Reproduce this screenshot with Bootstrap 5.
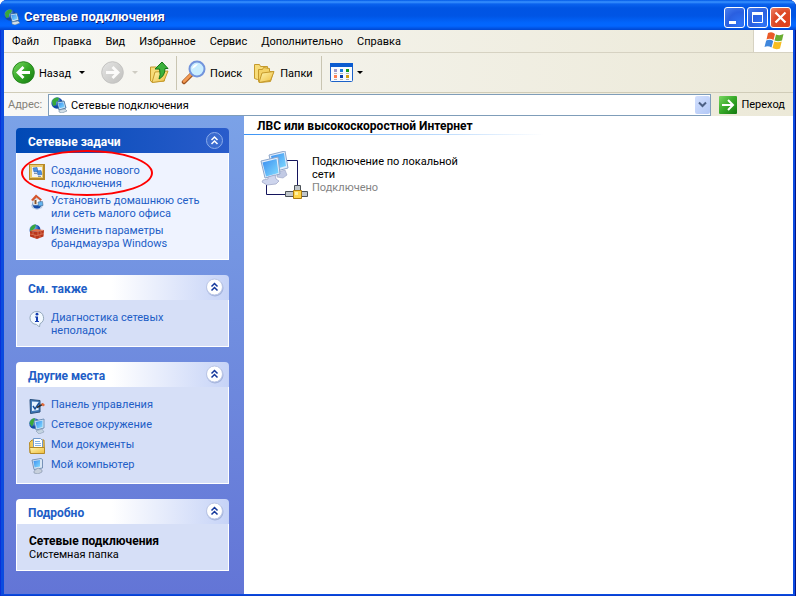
<!DOCTYPE html>
<html lang="ru">
<head>
<meta charset="utf-8">
<meta name="viewport" content="width=device-width, initial-scale=1">
<title>Сетевые подключения</title>
<link href="https://cdn.jsdelivr.net/npm/bootstrap@5.3.0/dist/css/bootstrap.min.css" rel="stylesheet">
<style>
body{font-family:Roboto,"Liberation Sans",sans-serif;font-size:11px;line-height:13px;color:#000;background:#fff}
button{font-size:11px;line-height:13px}
svg{display:block;flex:none}
.xp-window{background:#0a4be0;border-radius:7px 7px 0 0;padding:0 3px 2px 4px;box-shadow:inset 1px 0 #0831d9,inset -1px 0 #00138c,inset 0 -1px #0a3fd0}
.titlebar{height:30px;margin:0 -3px 0 -4px;padding:4px 5px 0 4px;border-radius:7px 7px 0 0;background:linear-gradient(#0058e6 0,#3a93ff 2px,#0a62ee 4px,#0054e3 8px,#0055e5 16px,#0266fd 23px,#0366ff 26px,#0046d0 30px)}
.titlebar h1{font-size:13px;line-height:16px;font-weight:700;color:#fff;text-shadow:1px 1px #0a1e80}
.win-buttons{gap:2px}
.win-btn{width:21px;height:21px;border:1px solid #fff;border-radius:3px;background:radial-gradient(circle at 80% 85%,#2f74f6,#2a5fe0 55%,#4a80ee);color:#fff}
.win-close{background:radial-gradient(circle at 75% 80%,#e0401c,#dc4a26 55%,#ee8468)}
.chrome{background:linear-gradient(90deg,#f8f8f5,#ece9d8)}
.menubar{height:23px;padding-left:1px;border-bottom:1px solid #d6d2c2}
.menubar .btn,.toolbar .btn,.go{border:0;border-radius:0;color:#000;line-height:13px;font-size:11px}
.menubar .btn{padding:4px 7px}
.flag{width:40px;background:#fff;border-left:1px solid #d6d2c2}
.toolbar{height:40px;border-bottom:1px solid #d0ccb8}
.toolbar .btn{padding:0}
.toolbar .btn span{padding-top:1px}
.toolbar .folders{margin-left:11px}
.divider{width:1px;height:34px;background:#c9c5b2}
.caret{width:0;height:0;border:3px solid transparent;border-top-color:#000;border-bottom:0}
.caret-off{border-top-color:#b8b6aa}
.address{height:23px}
.address label{color:#848278;width:40px}
.address-box{height:22px;padding-left:2px;background:#fff;border:1px solid #7f9db9}
.address-box input{border:0;outline:0;background:none;font-size:11px;line-height:13px;min-width:0;padding:1px 0 0}
.drop{width:15px;height:18px;border:0;border-radius:2px;background:linear-gradient(135deg,#d3e0fe,#b2c8f6);color:#4d6185}
.sidebar{width:240px;padding:12px 15px 12px 12px;background:linear-gradient(#7ba2e7,#6375d6);gap:15px}
.task-head{height:25px;padding:0 5px 0 12px;border-radius:4px 4px 0 0;background:linear-gradient(90deg,#fff 45%,#c6d3f7);color:#215dc6}
.task-head h2,.group-title{font-size:12px;line-height:15px;font-weight:700}
.task-head h2{padding-top:3px}
.task-head.primary-head{background:linear-gradient(90deg,#0049b5,#2a5ccb);color:#fff}
.task-body{padding:11px 12px 9px;border:1px solid #fff;border-top:0;background:#d6dff7}
.primary-body{background:#eff3ff}
.task-body a{color:#215dc6;gap:6px;min-height:16px}
.task-body strong{font-size:12px}
.fold{border:0;background:none}
.status{color:#848484}
.group-title{padding:3px 0 0 13px}
.group-line{height:1px;width:300px;max-width:100%;background:linear-gradient(90deg,#3a93f5,#fff)}
.connection{width:215px;gap:4px;padding-top:16px}
.highlight{position:absolute;left:5px;top:22px;width:132px;height:46px;border:2px solid #f00;border-radius:50%;pointer-events:none}
</style>
</head>
<body>
<svg width="0" height="0" class="position-absolute" aria-hidden="true">
<defs>
<linearGradient id="green" x2="1" y2="1"><stop stop-color="#7ad862"/><stop offset=".5" stop-color="#36a827"/><stop offset="1" stop-color="#137a10"/></linearGradient>
<linearGradient id="grey" x2="1" y2="1"><stop stop-color="#dedede"/><stop offset="1" stop-color="#a2a2a2"/></linearGradient>
<linearGradient id="screen" x2="1" y2="1"><stop stop-color="#3b8ef0"/><stop offset="1" stop-color="#82dcff"/></linearGradient>
<linearGradient id="yellow" x2="1" y2="1"><stop stop-color="#fff6b0"/><stop offset="1" stop-color="#eebc3c"/></linearGradient>
<radialGradient id="globe" cx=".35" cy=".3"><stop stop-color="#9cd4ff"/><stop offset="1" stop-color="#1248a8"/></radialGradient>
<symbol id="net" viewBox="0 0 16 16"><circle cx="6" cy="6" r="5.700" fill="url(#globe)"/><path d="M1 4C3 0 7 0 8 1L7 4 5 5 5 8 2 9Z" fill="#38a83a"/><path d="M6 5l7-1 2 7-7 2z" fill="#d4e6f6" stroke="#2d5f92" stroke-width=".8"/><path d="M7.200 6l5-.8 1.400 4.800-5 1.300z" fill="url(#screen)"/><path d="M8 13l6-1 2 2-5 2-3-1z" fill="#d2dfe8" stroke="#5d7c98" stroke-width=".5"/></symbol>
<symbol id="fold-light" viewBox="0 0 19 19"><circle cx="10" cy="10" r="8.500" fill="#8b9cca" opacity=".6"/><circle cx="9.500" cy="9" r="8" fill="#fff" stroke="#b9c5e6"/><path d="M6.500 8.500l3-3 3 3M6.500 12.500l3-3 3 3" fill="none" stroke="#14389c" stroke-width="1.500"/></symbol>
<symbol id="fold-dark" viewBox="0 0 19 19"><circle cx="9.500" cy="9.500" r="8" fill="#3a6bcf" stroke="#8cacea"/><path d="M6.500 9l3-3 3 3M6.500 13l3-3 3 3" fill="none" stroke="#fff" stroke-width="1.500"/></symbol>
</defs>
</svg>

<div class="xp-window min-vh-100 d-flex flex-column">
  <header class="titlebar d-flex align-items-center">
    <svg width="16" height="16"><use href="#net"/></svg>
    <h1 class="mb-0 ms-1 flex-grow-1">Сетевые подключения</h1>
    <div class="win-buttons d-flex">
      <button class="win-btn p-0" aria-label="Свернуть"><svg width="19" height="19"><path d="M4 13h7v3H4z" fill="#fff"/></svg></button>
      <button class="win-btn p-0" aria-label="Развернуть"><svg width="19" height="19"><path d="M4.500 4.500h10v10h-10z" fill="none" stroke="#fff"/><path d="M4 4h11v3H4z" fill="#fff"/></svg></button>
      <button class="win-btn win-close p-0" aria-label="Закрыть"><svg width="19" height="19"><path d="M4.500 4.500l10 10m0-10l-10 10" stroke="#fff" stroke-width="2.200"/></svg></button>
    </div>
  </header>

  <nav class="menubar chrome d-flex" aria-label="Меню">
    <div class="d-flex flex-grow-1">
      <button class="btn">Файл</button><button class="btn">Правка</button><button class="btn">Вид</button><button class="btn">Избранное</button><button class="btn">Сервис</button><button class="btn">Дополнительно</button><button class="btn">Справка</button>
    </div>
    <div class="flag d-flex align-items-center justify-content-center">
      <svg width="20" height="20"><path d="M4 2Q8 0 11 3L9.500 9Q6 7 2.500 8.500Z" fill="#ea5a28"/><path d="M12 3.500Q16 5 19.500 3L18 9.500Q14 11 10.500 9.500Z" fill="#6aad32"/><path d="M2.200 9.500Q6 8 9.200 10L7.500 16.500Q4 14.500.5 16Z" fill="#3e86dc"/><path d="M10.200 10.500Q14 12 17.700 10.500L16 17.500Q12 19 8.500 17Z" fill="#f8bd20"/></svg>
    </div>
  </nav>

  <div class="toolbar chrome d-flex align-items-center ps-2" role="toolbar" aria-label="Кнопки">
    <button class="btn d-flex align-items-center"><svg width="23" height="23"><circle cx="11.500" cy="11.500" r="10.800" fill="url(#green)" stroke="#27861f"/><path d="M18 11.500H7M11.500 6L6 11.500l5.500 5.500" fill="none" stroke="#fff" stroke-width="2.800"/></svg><span class="ms-1">Назад</span></button>
    <button class="btn px-2" aria-label="Журнал"><span class="caret d-block p-0"></span></button>
    <button class="btn ms-2" aria-label="Вперед" disabled><svg width="23" height="23"><circle cx="11.500" cy="11.500" r="10.800" fill="url(#grey)" stroke="#a9a9a9"/><path d="M5 11.500h11M11.500 6l5.500 5.500-5.500 5.500" fill="none" stroke="#fff" stroke-width="2.800"/></svg></button>
    <button class="btn px-2" aria-label="Журнал вперед" disabled><span class="caret caret-off d-block p-0"></span></button>
    <button class="btn ms-1" aria-label="Вверх"><svg width="22" height="23"><path d="M.5 6h6l1 2h7v12l-12 1-2-1z" fill="#f7dc78" stroke="#c59a2c"/><path d="M5 11l13-1-4 10-12 1.500z" fill="url(#yellow)" stroke="#c59a2c"/><path d="M5 8l7-7 6 6.500h-3Q15 15 9 18Q11 14 9.500 8z" fill="#3cb23c" stroke="#16781a"/></svg></button>
    <span class="divider mx-1"></span>
    <button class="btn d-flex align-items-center"><svg width="25" height="25"><path d="M3 22l8-8" stroke="#9e521e" stroke-width="4.500" stroke-linecap="round"/><path d="M3 21.500l7-7" stroke="#f39a52" stroke-width="2.500" stroke-linecap="round"/><circle cx="16" cy="9" r="7.500" fill="#c9edff" stroke="#7294dc" stroke-width="2"/><path d="M11 9q1-5 6-5-2 3-6 5" fill="#fff"/></svg><span class="ms-1">Поиск</span></button>
    <button class="btn folders d-flex align-items-center"><svg width="23" height="22"><path d="M1.500 2.500h5l1 2h7v12l-10 1-3-1z" fill="#f7dc78" stroke="#c59a2c"/><path d="M5.500 7.500h4l1-2 6 1v3h4l-3 10-11 1-1-1z" fill="#f4d266" stroke="#c59a2c"/><path d="M9 11l12-1.500-3.500 9-11.500 2z" fill="url(#yellow)" stroke="#c59a2c"/></svg><span class="ms-1">Папки</span></button>
    <span class="divider ms-2"></span>
    <button class="btn d-flex align-items-center ms-2" aria-label="Вид"><svg width="23" height="19"><rect x=".5" y=".5" width="22" height="18" rx="1" fill="#f8fbff" stroke="#1c62c8"/><path d="M0 0h23v4H0z" fill="#0a5bd0"/><path d="M4 6h3v3H4z" fill="#9e9ac8"/><path d="M10 6h3v3h-3z" fill="#1c7cdc"/><path d="M16 6h3v3h-3z" fill="#129a1c"/><path d="M4 12h3v3H4z" fill="#ff8050"/><path d="M10 12h3v3h-3z" fill="#083ca8"/><path d="M16 12h3v3h-3z" fill="#d8a010"/><path d="M4 10.500h3m3 0h3m3 0h3M4 16.500h3m3 0h3m3 0h3" stroke="#b4b4b4"/></svg><span class="caret p-0 ms-1"></span></button>
  </div>

  <form class="address chrome d-flex align-items-center ps-1">
    <label for="addr">Адрес:</label>
    <div class="address-box d-flex align-items-center flex-grow-1">
      <svg width="16" height="16"><use href="#net"/></svg>
      <input id="addr" class="flex-grow-1 ms-1" value="Сетевые подключения">
      <button type="button" class="drop p-0 d-flex align-items-center justify-content-center" aria-label="Список адресов"><svg width="9" height="7"><path d="M1 1.500l3.500 3.500L8 1.500" fill="none" stroke="currentColor" stroke-width="2"/></svg></button>
    </div>
    <button type="button" class="btn go d-flex align-items-center p-0 ms-2 me-2"><svg width="18" height="18"><rect width="18" height="18" rx="1" fill="url(#green)"/><path d="M3 9h11M9 4l5 5-5 5" fill="none" stroke="#fff" stroke-width="2"/></svg><span class="ms-1">Переход</span></button>
  </form>

  <div class="d-flex flex-grow-1 bg-white">
    <aside class="sidebar d-flex flex-column flex-shrink-0">
      <section class="position-relative">
        <div class="task-head primary-head d-flex align-items-center justify-content-between"><h2 class="mb-0">Сетевые задачи</h2><button class="fold p-0" aria-label="Свернуть раздел"><svg width="19" height="19"><use href="#fold-dark"/></svg></button></div>
        <div class="task-body primary-body d-flex flex-column gap-1">
          <a href="#" class="d-flex text-decoration-none"><svg width="16" height="16"><path d="M0 0h16v16H0z" fill="#b88a28"/><path d="M1 1h13v13H1z" fill="#e9c96c"/><path d="M3 3h10v10H3z" fill="#f2f4f8"/><path d="M4 4l4-.5 1 4-4 .5zM8 7l4-.5 1 4-4 .5z" fill="#4a90e2" stroke="#3468b4" stroke-width=".6"/><path d="M5 9h3v1H5zM9 12h3v1H9z" fill="#8796ac"/></svg><span>Создание нового<br>подключения</span></a>
          <a href="#" class="d-flex text-decoration-none"><svg width="16" height="16"><path d="M2 11l6-3 6 2-1 4-5 2-5-2z" fill="#b9cde6"/><circle cx="8" cy="10" r="4.500" fill="url(#globe)"/><path d="M4 5h7v6H4z" fill="#fff" stroke="#8898ac" stroke-width=".6"/><path d="M2 6L7 .5l6 5-1.500 1.200L7.500 3.500 4 7z" fill="#d4552c"/><path d="M5.500 6h2v4h-2z" fill="#86552c"/><path d="M9 8l4.500-.5.500 4-4.500.7z" fill="#63b4f2" stroke="#45698e" stroke-width=".6"/></svg><span>Установить домашнюю сеть<br>или сеть малого офиса</span></a>
          <a href="#" class="d-flex text-decoration-none"><svg width="16" height="16"><circle cx="6" cy="6" r="5.500" fill="url(#globe)"/><path d="M1 5q2-5 6-4.500L6 4 2 8z" fill="#3ba83c"/><path d="M1 7l8 1 6-2-.5 6.500L8 15l-7-2.500z" fill="#b9361c"/><path d="M1 7l6-2 8 1-6 2z" fill="#e57248"/><path d="M1 10l7 1.500 7-2M4 8v2.500M9 8v3.500M6 11v3M12 7.500V10m-1 1.500V14" fill="none" stroke="#eda07c" stroke-width=".5"/></svg><span>Изменить параметры<br>брандмауэра Windows</span></a>
        </div>
        <span class="highlight" aria-hidden="true"></span>
      </section>

      <section>
        <div class="task-head d-flex align-items-center justify-content-between"><h2 class="mb-0">См. также</h2><button class="fold p-0" aria-label="Свернуть раздел"><svg width="19" height="19"><use href="#fold-light"/></svg></button></div>
        <div class="task-body d-flex flex-column gap-1">
          <a href="#" class="d-flex text-decoration-none"><svg width="16" height="16"><path d="M8 .5a6.800 6.500 0 0 1 3 12.200L10.500 16 7.500 13.500A6.800 6.500 0 0 1 8 .5z" fill="#f2f9ff" stroke="#94a8bc"/><circle cx="8" cy="3.200" r="1.400" fill="#153db0"/><path d="M6 5.500h3V10h1v1H6v-1h1V6.500H6z" fill="#153db0"/></svg><span>Диагностика сетевых<br>неполадок</span></a>
        </div>
      </section>

      <section>
        <div class="task-head d-flex align-items-center justify-content-between"><h2 class="mb-0">Другие места</h2><button class="fold p-0" aria-label="Свернуть раздел"><svg width="19" height="19"><use href="#fold-light"/></svg></button></div>
        <div class="task-body d-flex flex-column gap-1">
          <a href="#" class="d-flex text-decoration-none"><svg width="16" height="16"><path d="M1 1.500l10 1V14L1.500 15.500z" fill="#3f79b8" stroke="#29507e"/><path d="M3 3.500l6.500.5v8L3 13z" fill="#e5f3ff"/><path d="M4 8l2 3 4-6" fill="none" stroke="#174e96" stroke-width="1.500"/><path d="M8 9.500L14 6" stroke="#2c2c2c" stroke-width="1.500"/><path d="M12 6l2-1 2 2-2 1.500z" fill="#e26937"/></svg><span>Панель управления</span></a>
          <a href="#" class="d-flex text-decoration-none"><svg width="16" height="16"><circle cx="5.500" cy="5.500" r="5.300" fill="url(#globe)"/><path d="M.5 5Q2 0 6 .2L5 4 3 9z" fill="#3aa83a"/><path d="M5 3l10-2v9L7 12z" fill="#d4e6f6" stroke="#5b7ea6" stroke-width=".8"/><path d="M6.500 4l7-1.500v6.500L8 10.500z" fill="url(#screen)"/><path d="M7 13l6-2 2 3-5 2z" fill="#c5d4e2" stroke="#7c90a8" stroke-width=".5"/></svg><span>Сетевое окружение</span></a>
          <a href="#" class="d-flex text-decoration-none"><svg width="16" height="16"><path d="M.5 4.500L3 2h12l.5 13H1z" fill="#f0c95a" stroke="#b58a28"/><path d="M4.500.5h7l2 2V11h-9z" fill="#fff" stroke="#7099cc"/><path d="M6 3.500h5M6 5.500h6M6 7.500h6" stroke="#84b4e4"/><path d="M.5 9.500h15v6h-14z" fill="url(#yellow)" stroke="#b58a28"/></svg><span>Мои документы</span></a>
          <a href="#" class="d-flex text-decoration-none"><svg width="16" height="16"><path d="M3 2l9-1.500 1.500 1V10L5 11.500z" fill="#d9e6f4" stroke="#5f7fa8" stroke-width=".8"/><path d="M4.500 3l6.500-1v6.500l-5.500 1z" fill="url(#screen)"/><path d="M5 13l4-3 4 2v2l-4 2-4-1z" fill="#c7d0dc" stroke="#8090a8" stroke-width=".6"/></svg><span>Мой компьютер</span></a>
        </div>
      </section>

      <section>
        <div class="task-head d-flex align-items-center justify-content-between"><h2 class="mb-0">Подробно</h2><button class="fold p-0" aria-label="Свернуть раздел"><svg width="19" height="19"><use href="#fold-light"/></svg></button></div>
        <div class="task-body"><strong class="d-block">Сетевые подключения</strong>Системная папка</div>
      </section>
    </aside>

    <main class="flex-grow-1">
      <h2 class="group-title mb-0">ЛВС или высокоскоростной Интернет</h2>
      <div class="group-line"></div>
      <div class="connection d-flex ms-3">
        <svg width="48" height="50"><path d="M27 9.500h10.500V34M6.500 34v9.500H26" fill="none" stroke="#14145c"/><path d="M9 4L25 0l3 17-15 4z" fill="#e3eefc" stroke="#8da6ca"/><path d="M11 5l13-3 2 13-12 3.500z" fill="url(#screen)"/><path d="M18 21l7-2 2 5-4 3-6-1z" fill="#c2cae4" stroke="#9aa2c4" stroke-width=".6"/><path d="M1 10l17-4 2 17-15 4z" fill="#e3eefc" stroke="#8da6ca"/><path d="M2.500 11.500l14-3.500 2 14-12.500 3.500z" fill="url(#screen)"/><path d="M8 26l7-2 1 4 3 2-3 3-9 1-5-3 1-2 5-1z" fill="#ced5ed" stroke="#9aa2c4" stroke-width=".7"/><path d="M34.500 34.500h6v6h-6zM25.500 40.500h8v5h-8zM41.500 40.500h6v5h-6z" fill="#bfc5ca" stroke="#4c5258"/><path d="M33.500 39.500h8v8h-8z" fill="#ffd64a" stroke="#b07c0c"/><path d="M35 41h3v3h-3z" fill="#fff1a0"/></svg>
        <div class="pt-1">Подключение по локальной сети<div class="status">Подключено</div></div>
      </div>
    </main>
  </div>
</div>
<script src="https://cdn.jsdelivr.net/npm/bootstrap@5.3.0/dist/js/bootstrap.bundle.min.js"></script>
</body>
</html>
